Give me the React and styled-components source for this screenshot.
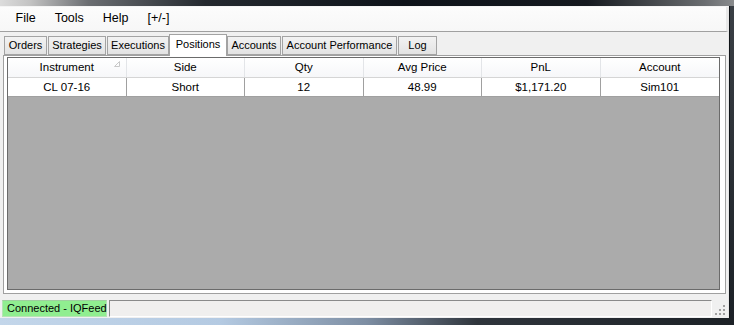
import React from 'react';
import styled, { createGlobalStyle } from 'styled-components';

const GlobalStyle = createGlobalStyle`
  html, body {
    margin: 0;
    padding: 0;
    background: #1f242a;
  }
  * { box-sizing: border-box; }
`;

const menuItems = ['File', 'Tools', 'Help', '[+/-]'];

const tabs = [
  { label: 'Orders', width: 43 },
  { label: 'Strategies', width: 58 },
  { label: 'Executions', width: 62 },
  { label: 'Positions', width: 58, active: true },
  { label: 'Accounts', width: 54 },
  { label: 'Account Performance', width: 115 },
  { label: 'Log', width: 39 },
];

const columns = ['Instrument', 'Side', 'Qty', 'Avg Price', 'PnL', 'Account'];
const rows = [['CL 07-16', 'Short', '12', '48.99', '$1,171.20', 'Sim101']];

const App = () => {
  return (
    <Screen>
      <GlobalStyle />
      <TitleStrip />
      <Middle>
        <Window>
          <MenuBar>
            {menuItems.map(m => <MenuItem key={m}>{m}</MenuItem>)}
          </MenuBar>
          <TabArea>
            <TabStrip>
              {tabs.map(t => (
                <Tab key={t.label} $w={t.width} $active={t.active}>{t.label}</Tab>
              ))}
            </TabStrip>
            <Panel>
              <Grid>
                <HeaderRow>
                  {columns.map((c, i) => (
                    <HeaderCell key={c}>
                      {c}
                      {i === 0 && (
                        <SortGlyph width="6" height="6" viewBox="0 0 6 6">
                          <path d="M0.5 5.5 L5.5 0.5 L5.5 5.5 Z" fill="none" stroke="#c8c8c8" strokeWidth="1" />
                        </SortGlyph>
                      )}
                    </HeaderCell>
                  ))}
                </HeaderRow>
                {rows.map((r, i) => (
                  <DataRow key={i}>
                    {r.map((v, j) => <DataCell key={j}>{v}</DataCell>)}
                  </DataRow>
                ))}
                <EmptyArea />
              </Grid>
            </Panel>
          </TabArea>
          <StatusBar>
            <StatusConnected>Connected - IQFeed</StatusConnected>
            <StatusPanel />
            <Grip>
              <svg width="12" height="12" viewBox="0 0 12 12">
                {[[9, 1], [9, 5], [5, 5], [9, 9], [5, 9], [1, 9]].map(([x, y]) => (
                  <rect key={x + '-' + y} x={x} y={y} width="2" height="2" fill="#a0a0a0" />
                ))}
              </svg>
            </Grip>
          </StatusBar>
        </Window>
        <RightFrame />
      </Middle>
      <BottomFrame />
    </Screen>
  );
};

export default App;

const Screen = styled.div`
  width: 734px;
  height: 325px;
  display: flex;
  flex-direction: column;
  overflow: hidden;
  background: #1f242a;
`;

const TitleStrip = styled.div`
  height: 6px;
  flex-shrink: 0;
  background: linear-gradient(to right, #dcdcdc 0%, #c4c4c4 4%, #6b6e72 12%, #24292f 28%, #0e131a 55%, #15191f 80%, #6a6d70 96%, #8a8c8e 100%);
`;

const Middle = styled.div`
  flex: 1;
  display: flex;
  min-height: 0;
`;

const Window = styled.div`
  width: 729px;
  display: flex;
  flex-direction: column;
  background: #f0f0f0;
  border-top: 1px solid #f4f4f4;
  border-right: 1px solid #e6e6e6;
  box-shadow: 1px 0 0 #2a2e33;
`;

const RightFrame = styled.div`
  flex: 1;
  background: linear-gradient(#3a3f45, #1c2127);
  border-left: 1px solid #101418;
`;

const MenuBar = styled.div`
  height: 25px;
  display: flex;
  align-items: center;
  padding: 0 0 1px 6px;
  background: linear-gradient(#fcfcfc, #f7f7f7);
  border-bottom: 1px solid #a0a0a0;
  border-right: 2px solid #e8e8e8;
  font-family: "Liberation Sans", Arial, sans-serif;
  font-size: 12.5px;
  color: #000;
`;

const MenuItem = styled.div`
  padding: 0 9.5px;
`;

const TabArea = styled.div`
  display: flex;
  flex-direction: column;
  padding: 1px 3px 0 3px;
  height: 264px;
`;

const TabStrip = styled.div`
  display: flex;
  align-items: flex-end;
  height: 22px;
  padding-left: 1px;
  gap: 1px;
  position: relative;
  z-index: 1;
`;

const Tab = styled.div`
  width: ${p => p.$w}px;
  height: ${p => (p.$active ? 22 : 19)}px;
  margin-bottom: ${p => (p.$active ? -1 : 0)}px;
  margin-left: ${p => (p.$active ? -1 : 0)}px;
  margin-right: ${p => (p.$active ? -1 : 0)}px;
  display: flex;
  align-items: center;
  justify-content: center;
  padding-bottom: ${p => (p.$active ? 3 : 0)}px;
  border: 1px solid #a3a3a3;
  border-bottom: ${p => (p.$active ? 'none' : '1px solid #a3a3a3')};
  background: ${p => (p.$active ? '#ffffff' : 'linear-gradient(#f2f2f2, #e3e3e3)')};
  font-family: "Liberation Sans", Arial, sans-serif;
  font-size: 11px;
  color: #000;
  white-space: nowrap;
`;

const Panel = styled.div`
  width: 723px;
  height: 239px;
  border: 1px solid #a0a0a0;
  background: #ffffff;
  padding: 1px 3px 3px 3px;
`;

const Grid = styled.div`
  height: 100%;
  width: 713px;
  display: flex;
  flex-direction: column;
  border: 1px solid #6b6b6b;
  background: #ababab;
  font-family: "Liberation Sans", Arial, sans-serif;
  font-size: 11.5px;
  color: #000;
`;

const HeaderRow = styled.div`
  display: grid;
  grid-template-columns: repeat(6, 1fr);
  height: 20px;
  background: linear-gradient(#ffffff, #f6f7f9);
  border-bottom: 1px solid #d5d5d5;
`;

const HeaderCell = styled.div`
  position: relative;
  display: flex;
  align-items: center;
  justify-content: center;
  border-right: 1px solid #e3e5e8;
  &:last-child { border-right: none; }
`;

const SortGlyph = styled.svg`
  position: absolute;
  right: 6px;
  top: 3px;
`;

const DataRow = styled.div`
  display: grid;
  grid-template-columns: repeat(6, 1fr);
  height: 19px;
  background: #ffffff;
  border-bottom: 1px solid #a0a0a0;
`;

const DataCell = styled.div`
  display: flex;
  align-items: center;
  justify-content: center;
  border-right: 1px solid #a0a0a0;
  &:last-child { border-right: none; }
`;

const EmptyArea = styled.div`
  flex: 1;
  background: #ababab;
`;

const StatusBar = styled.div`
  height: 23px;
  display: flex;
  align-items: flex-end;
  padding: 0 2px 1px 2px;
  gap: 2px;
  font-family: "Liberation Sans", Arial, sans-serif;
  font-size: 11px;
`;

const StatusConnected = styled.div`
  width: 105px;
  height: 17px;
  display: flex;
  align-items: center;
  padding-left: 4px;
  background: #90ee90;
  border: 1px solid #b5e3b5;
  border-top-color: #9fcf9f;
  color: #000;
  white-space: nowrap;
`;

const StatusPanel = styled.div`
  flex: 1;
  height: 17px;
  background: #f0efee;
  border-top: 1px solid #8a8a8a;
  border-left: 1px solid #8a8a8a;
  border-right: 1px solid #ffffff;
  border-bottom: 1px solid #ffffff;
`;

const Grip = styled.div`
  width: 12px;
  height: 12px;
  display: flex;
  margin-bottom: 1px;
`;

const BottomFrame = styled.div`
  height: 7px;
  flex-shrink: 0;
  background: linear-gradient(to right, #c3d6ea 0%, #b4cae2 30%, #7d8ea3 50%, #2f353c 65%, #1c2126 100%);
`;
